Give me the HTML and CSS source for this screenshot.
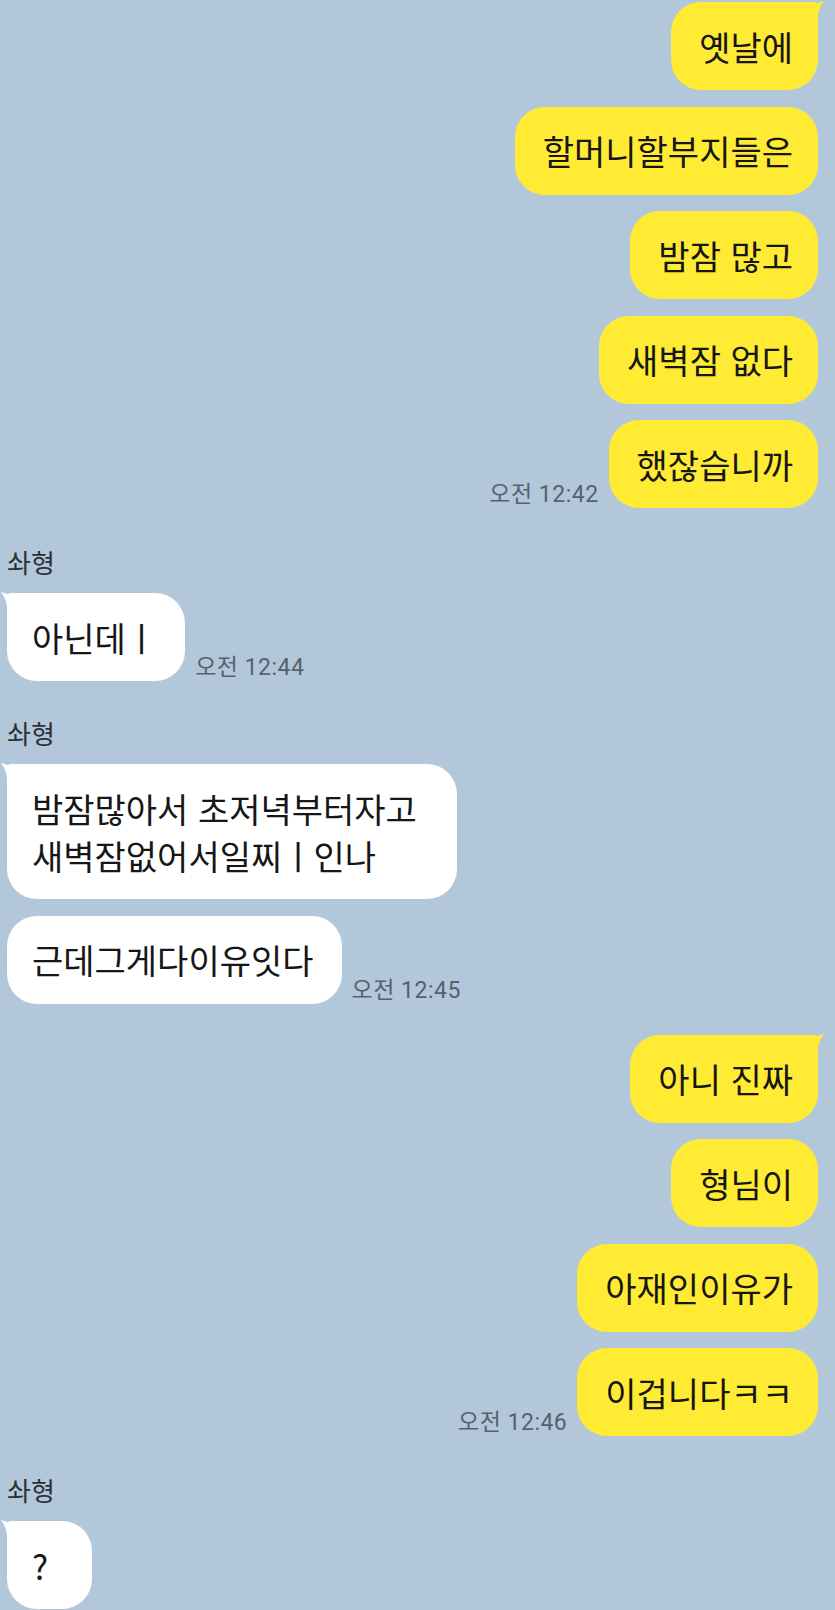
FILE: index.html
```html
<!DOCTYPE html>
<html lang="ko">
<head>
    <meta charset="UTF-8">
    <meta name="viewport" content="width=device-width, initial-scale=1.0">
    <title>솨형</title>
    <link rel="stylesheet" href="styles.css">
</head>
<body>
    <div class="chat">
        <!-- my messages -->
        <div class="group me">
            <div class="row">
                <div class="bubble first">옛날에
                    <svg class="tail" viewBox="0 0 22 20" width="22" height="20"><path d="M0,1 Q4,1 7,6 Q13,2 22,0 Q17,6 16,15 L16,20 L0,20 Z"/></svg>
                </div>
            </div>
            <div class="row"><div class="bubble">할머니할부지들은</div></div>
            <div class="row"><div class="bubble">밤잠 많고</div></div>
            <div class="row"><div class="bubble">새벽잠 없다</div></div>
            <div class="row"><span class="time">오전 12:42</span><div class="bubble">했잖습니까</div></div>
        </div>

        <div class="group other">
            <div class="name">솨형</div>
            <div class="row">
                <div class="bubble first">아닌데ㅣ
                    <svg class="tail" viewBox="0 0 22 20" width="22" height="20"><path d="M22,1 Q18,1 15,6 Q9,2 0,0 Q5,6 6,15 L6,20 L22,20 Z"/></svg>
                </div>
                <span class="time">오전 12:44</span>
            </div>
        </div>

        <div class="group other">
            <div class="name">솨형</div>
            <div class="row">
                <div class="bubble first wrapped">밤잠많아서 초저녁부터자고<br>새벽잠없어서일찌ㅣ인나
                    <svg class="tail" viewBox="0 0 22 20" width="22" height="20"><path d="M22,1 Q18,1 15,6 Q9,2 0,0 Q5,6 6,15 L6,20 L22,20 Z"/></svg>
                </div>
            </div>
            <div class="row"><div class="bubble">근데그게다이유잇다</div><span class="time">오전 12:45</span></div>
        </div>

        <div class="group me">
            <div class="row">
                <div class="bubble first">아니 진짜
                    <svg class="tail" viewBox="0 0 22 20" width="22" height="20"><path d="M0,1 Q4,1 7,6 Q13,2 22,0 Q17,6 16,15 L16,20 L0,20 Z"/></svg>
                </div>
            </div>
            <div class="row"><div class="bubble">형님이</div></div>
            <div class="row"><div class="bubble">아재인이유가</div></div>
            <div class="row"><span class="time">오전 12:46</span><div class="bubble">이겁니다ㅋㅋ</div></div>
        </div>

        <div class="group other">
            <div class="name">솨형</div>
            <div class="row">
                <div class="bubble first">?
                    <svg class="tail" viewBox="0 0 22 20" width="22" height="20"><path d="M22,1 Q18,1 15,6 Q9,2 0,0 Q5,6 6,15 L6,20 L22,20 Z"/></svg>
                </div>
            </div>
        </div>
    </div>
</body>
</html>
```

FILE: styles.css
```css
html, body {
    height: 100%;
}
body {
    margin: 0;
    background-color: #b2c7d9; /* kakao blue-grey */
    font-family: "Noto Sans CJK KR", "Noto Sans", sans-serif;
    color: #161616;
    overflow: hidden;
}
.chat {
    display: flex;
    flex-direction: column;
    padding: 2px 17px 0 7px;
}
.group {
    display: flex;
    flex-direction: column;
    gap: 16.5px;
}
.group + .group {
    margin-top: 36px;
}
.me + .other {
    margin-top: 38px;
}
.other + .me {
    margin-top: 31px;
}
.group.me {
    align-items: flex-end;
}
.group.other {
    align-items: flex-start;
}
.name {
    font-size: 26px;
    line-height: 32px;
    color: #2b3137;
    margin-bottom: -1.5px;
}
.row {
    display: flex;
    align-items: flex-end;
    gap: 10px;
}
.bubble {
    position: relative;
    font-size: 34px;
    line-height: 47px;
    padding: 20.5px 25px 20.5px 28px;
    border-radius: 30px;
    white-space: nowrap;
}
.me .bubble {
    background-color: #ffeb33;
}
.other .bubble {
    background-color: #ffffff;
    padding: 20.5px 28px 20.5px 25px;
    min-width: 85px;
    box-sizing: border-box;
}
.other .bubble.wrapped {
    padding-right: 40px;
}
.me .bubble.first {
    border-top-right-radius: 4px;
}
.other .bubble.first {
    border-top-left-radius: 4px;
}
.tail {
    position: absolute;
    top: -1px;
}
.me .tail {
    right: -6px;
    fill: #ffeb33;
}
.other .tail {
    left: -6px;
    fill: #ffffff;
}
.time {
    font-family: "Roboto", "Noto Sans CJK KR", sans-serif;
    font-size: 23px;
    letter-spacing: 0.5px;
    line-height: 27px;
    color: #56616d;
    white-space: nowrap;
}
```
